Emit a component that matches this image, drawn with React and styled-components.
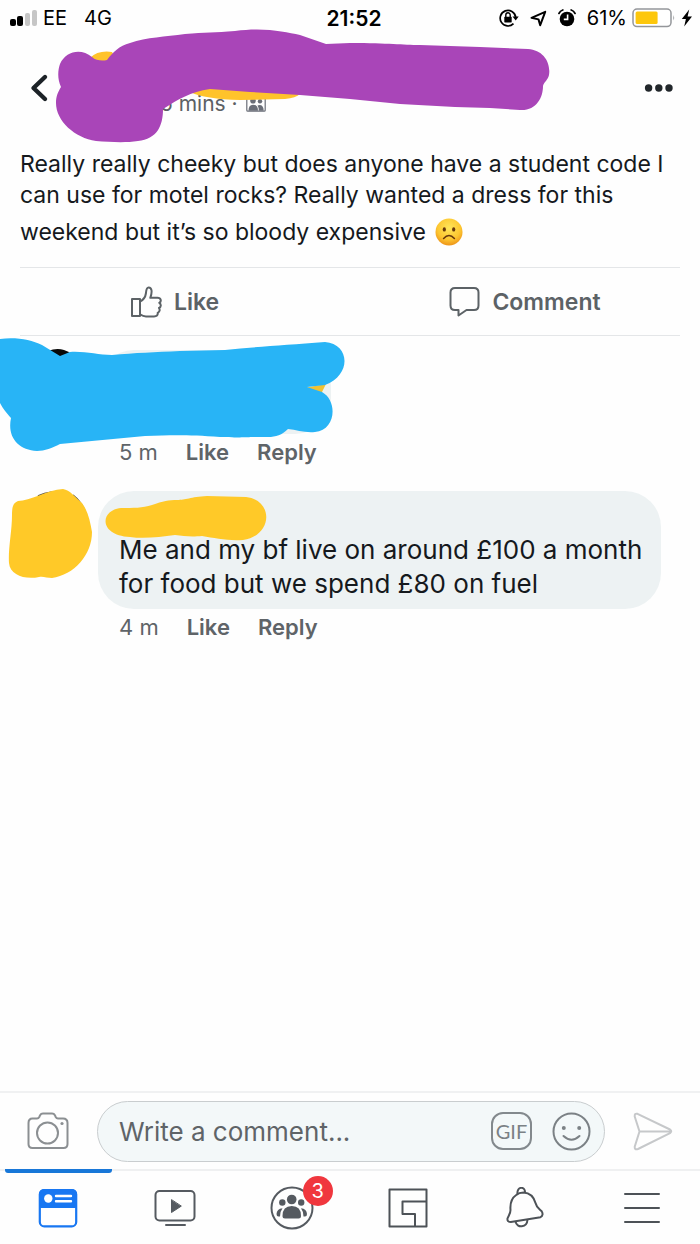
import React from "react";
import styled, { createGlobalStyle } from "styled-components";

const GlobalStyle = createGlobalStyle`
  * {
    box-sizing: border-box;
  }

  body {
    margin: 0;
    background-color: #fefefe;
    color: #15191d;
    font-family: Inter, "Liberation Sans", sans-serif;
  }

  button {
    padding: 0;
    border: none;
    background: none;
    font: inherit;
    color: inherit;
    cursor: pointer;
  }

  svg {
    display: block;
    flex-shrink: 0;
  }
`;

const Screen = styled.div`
  display: flex;
  flex-direction: column;
  min-height: 100vh;
  overflow-x: hidden;
`;

const StatusBar = styled.div`
  display: grid;
  grid-template-columns: 1fr auto 1fr;
  align-items: center;
  height: 36px;
  padding: 0 2px 0 10px;
  color: #000;
  font-size: 20px;
`;

const StatusGroup = styled.div`
  display: flex;
  align-items: center;
  gap: ${(props) => props.$gap}px;
`;

const StatusEnd = styled(StatusGroup)`
  justify-content: flex-end;
  padding-right: 5px;
`;

const Clock = styled.time`
  font-size: 21px;
  font-weight: 600;
`;

const Header = styled.header`
  position: relative;
  display: flex;
  align-items: center;
  justify-content: space-between;
  height: 104px;
  padding: 0 26px 0 28px;
`;

const PostMeta = styled.div`
  display: flex;
  align-items: center;
  flex: 1;
  gap: 8px;
  padding: 30px 0 0 110px;
  color: #5c6064;
  font-size: 21px;
`;

// marker strokes that hide names and avatars
const Scribble = styled.svg`
  position: absolute;
  top: ${(props) => props.$top}px;
  left: ${(props) => props.$left}px;
  pointer-events: none;
`;

const PostText = styled.p`
  margin: 0;
  padding: 9px 20px 10px;
  font-size: 23px;
  line-height: 31px;
`;

const Emoji = styled.span`
  display: inline-flex;
  align-items: center;
  height: 46px;
  padding: 0 0 4px 3px;
  vertical-align: middle;
`;

const Actions = styled.div`
  display: flex;
  height: 67px;
`;

const Divider = styled.hr`
  width: calc(100% - 40px);
  height: 1px;
  margin: 0 20px;
  border: none;
  background-color: #e4e6e8;
`;

const ActionButton = styled.button`
  display: flex;
  flex: 1;
  align-items: center;
  justify-content: center;
  gap: 12px;
  color: #5c6266;
  font-size: 23px;
  font-weight: 600;
`;

const Comments = styled.main`
  flex: 1;
`;

const Comment = styled.article`
  position: relative;
  padding: ${(props) => props.$top}px 39px 0 98px;
`;

const Bubble = styled.div`
  width: fit-content;
  min-width: ${(props) => props.$min || 0}px;
  min-height: ${(props) => props.$height}px;
  padding: 42px 12px 8px 21px;
  border-radius: 36px;
  background-color: #edf2f3;
  font-size: 26px;
  line-height: 34px;
`;

const CommentMeta = styled.div`
  display: flex;
  align-items: center;
  gap: 28px;
  height: 36px;
  padding-left: 21px;
  color: #5f6468;
  font-size: 22px;

  button {
    font-weight: 600;
  }
`;

const Composer = styled.form`
  display: flex;
  align-items: center;
  height: 78px;
  padding: 0 27px;
  gap: 28px;
  border-top: 2px solid #f0f1f2;
`;

const InputPill = styled.div`
  display: flex;
  flex: 1;
  align-items: center;
  gap: 20px;
  min-width: 0;
  height: 61px;
  padding: 0 13px 0 21px;
  border: 1px solid #c9cdcf;
  border-radius: 31px;
  background-color: #f3f8f9;
`;

const CommentInput = styled.input`
  flex: 1;
  min-width: 0;
  padding: 0;
  border: none;
  outline: none;
  background: none;
  color: #15191d;
  font: inherit;
  font-size: 26px;

  &::placeholder {
    color: #5f6468;
    opacity: 1;
  }
`;

const GifButton = styled.button`
  && {
    width: 41px;
    height: 38px;
    border: 2px solid #83898d;
    border-radius: 12px;
    color: #7b8185;
    font-family: Lato, "Liberation Sans", sans-serif;
    font-size: 20px;
    line-height: 34px;
  }
`;

const TabBar = styled.nav`
  display: flex;
  height: 75px;
  border-top: 2px solid #eff0f1;
`;

const Tab = styled.button`
  position: relative;
  display: flex;
  flex: 1;
  align-items: center;
  justify-content: center;

  &::before {
    content: "";
    position: absolute;
    top: -2px;
    right: 5px;
    left: 5px;
    height: 4px;
    border-radius: 0 0 3px 3px;
    background-color: ${(props) => (props.$active ? "#1877d8" : "transparent")};
  }
`;

const Badge = styled.span`
  position: absolute;
  top: 5px;
  left: calc(50% + 11px);
  width: 30px;
  height: 30px;
  border-radius: 50%;
  background-color: #f0373e;
  color: #fff;
  font-size: 20px;
  line-height: 30px;
  text-align: center;
`;

const SignalIcon = () => (
  <svg width="28" height="18" viewBox="0 0 28 18">
    <rect x="0" y="10" width="6" height="7" rx="2" />
    <rect x="7" y="7" width="6" height="10" rx="2" />
    <rect x="15" y="4" width="5" height="13" rx="2" fill="#c6c6c6" />
    <rect x="22" y="1" width="5" height="16" rx="2" fill="#c6c6c6" />
  </svg>
);

const LockIcon = () => (
  <svg width="20" height="18" viewBox="0 0 20 18" fill="none" stroke="#000">
    <path d="M14.5 14.7A7.8 7.8 0 1 1 16.7 8" strokeWidth="1.7" />
    <path d="M13.5 7.5h6.2l-3 4z" fill="#000" stroke="none" />
    <rect x="5.3" y="7.8" width="7.4" height="5.6" rx="0.6" fill="#000" stroke="none" />
    <path d="M6.8 8V6a2.2 2.2 0 0 1 4.4 0v2" strokeWidth="1.4" />
  </svg>
);

const LocationIcon = () => (
  <svg width="17" height="17" viewBox="0 0 17 17" fill="none" stroke="#000" strokeWidth="2" strokeLinejoin="round">
    <path d="M15.2 1.8L1.5 7.8l7 1.6 1.700 5.800z" />
  </svg>
);

const AlarmIcon = () => (
  <svg width="18" height="18" viewBox="0 0 18 18">
    <circle cx="9" cy="10" r="7.3" />
    <path d="M1 4.4Q2.2 1.8 4.8 1M17 4.4Q15.8 1.8 13.2 1" fill="none" stroke="#000" strokeWidth="1.8" strokeLinecap="round" />
    <path d="M9.6 5.4v5H5.8" fill="none" stroke="#fff" strokeWidth="1.6" />
  </svg>
);

const BatteryIcon = () => (
  <svg width="44" height="20" viewBox="0 0 44 20">
    <rect x="1" y="1" width="38" height="17.6" rx="4" fill="#fff" stroke="#94969a" strokeWidth="1.5" />
    <rect x="3.6" y="3.6" width="22" height="12.4" rx="1.5" fill="#fdc70c" />
    <path d="M41.3 7q1.8 2.8 0 5.6z" fill="#94969a" />
  </svg>
);

const BoltIcon = () => (
  <svg width="12" height="18" viewBox="0 0 12 18">
    <path d="M8.2 0.6L0.8 10h4.1L3.2 17.4 11 7.5H6.6z" />
  </svg>
);

const BackIcon = () => (
  <svg width="22" height="30" viewBox="0 0 22 30" fill="none" stroke="#1c2227" strokeWidth="4.400" strokeLinecap="round" strokeLinejoin="round">
    <path d="M17 4L5.5 15 17 26" />
  </svg>
);

const DotsIcon = () => (
  <svg width="30" height="10" viewBox="0 0 30 10" fill="#22272b">
    <circle cx="4.6" cy="5" r="3.7" />
    <circle cx="14.8" cy="5" r="3.7" />
    <circle cx="25" cy="5" r="3.7" />
  </svg>
);

const AudienceIcon = () => (
  <svg width="20" height="18" viewBox="0 0 20 18" fill="#6a6e78">
    <rect x="0.8" y="0.8" width="18.4" height="16.4" rx="1" fill="none" stroke="#6a6e78" strokeWidth="1.2" />
    <circle cx="7" cy="6.8" r="2.8" />
    <circle cx="14" cy="7.2" r="2.2" />
    <path d="M2.5 16.8q0-6 4.5-6 5 0 5 6zM12.8 16.8q0-3.600-1.300-5.400 6-1.600 6.200 5.400z" />
  </svg>
);

const SadFace = () => (
  <svg width="28" height="28" viewBox="0 0 28 28" role="img" aria-label="Sad face">
    <defs>
      <radialGradient id="face" cx="50%" cy="35%" r="65%">
        <stop offset="0" stopColor="#ffe65a" />
        <stop offset="0.65" stopColor="#fdc731" />
        <stop offset="1" stopColor="#ed9418" />
      </radialGradient>
    </defs>
    <circle cx="14" cy="14" r="13.5" fill="url(#face)" />
    <ellipse cx="9.3" cy="11.4" rx="1.6" ry="2.2" fill="#68380c" />
    <ellipse cx="18.700" cy="11.4" rx="1.6" ry="2.2" fill="#68380c" />
    <path d="M8.600 20.500Q14 14.600 19.400 20.500" fill="none" stroke="#68380c" strokeWidth="1.600" strokeLinecap="round" />
  </svg>
);

const LikeIcon = () => (
  <svg width="31" height="32" viewBox="0 0 31 32" fill="none" stroke="#5c6266" strokeWidth="2" strokeLinejoin="round">
    <path d="M1 13h8v17H1z" />
    <path d="M9 15.500c3-1.500 5.400-4.500 5.900-8 .3-3 .4-6 2.700-6 3.400 0 3.800 4.500 1.700 10.300h7.200c3.600 0 4.200 3.600 1.800 5 2.200 1.500 1.800 4.200-.3 5.200 1.300 1.800.6 4-1.300 4.800.3 2.500-1 3.600-3.700 3.600H15c-2.500 0-4-.8-6-2" />
  </svg>
);

const CommentIcon = () => (
  <svg width="31" height="31" viewBox="0 0 31 31" fill="none" stroke="#5c6266" strokeWidth="2" strokeLinejoin="round">
    <path d="M6 2h19q4.500 0 4.500 4.500v13q0 4.500-4.500 4.500h-7.500L9.500 29.500V24H6q-4.500 0-4.500-4.500v-13Q1.500 2 6 2z" />
  </svg>
);

const CameraIcon = () => (
  <svg width="42" height="38" viewBox="0 0 42 38" fill="none" stroke="#8b8f92" strokeWidth="2">
    <path d="M5.500 6.500H10q1.500 0 2.300-1.500l.8-1.800Q14 1.500 16 1.500h9q2 0 2.900 1.700l.8 1.800q.8 1.500 2.300 1.500h5q4.500 0 4.500 4.500v21q0 4-4 4h-31q-4 0-4-4V11q0-4.500 4-4.500z" />
    <circle cx="20.500" cy="21" r="10.500" />
    <circle cx="35" cy="11.500" r="1.600" fill="#8b8f92" stroke="none" />
  </svg>
);

const SmileIcon = () => (
  <svg width="39" height="39" viewBox="0 0 39 39" fill="none" stroke="#7b8185" strokeWidth="2" strokeLinecap="round">
    <circle cx="19.500" cy="19.500" r="18" />
    <circle cx="11.800" cy="16" r="2" fill="#7b8185" stroke="none" />
    <circle cx="27.200" cy="16" r="2" fill="#7b8185" stroke="none" />
    <path d="M11.500 24Q19.500 31.500 27.500 24" />
  </svg>
);

const SendIcon = () => (
  <svg width="40" height="39" viewBox="0 0 40 39" fill="none" stroke="#c6c8ca" strokeWidth="2" strokeLinejoin="round">
    <path d="M4.500 1.800L37 17.500q2.500 1.800 0 3.600L5 37q-3.500 1.300-3.300-2.200L6.500 19.500 1.700 4.500Q1.500 1 4.500 1.800zM6.500 19.500H38" />
  </svg>
);

const FeedIcon = () => (
  <svg width="40" height="40" viewBox="0 0 40 40">
    <rect x="1.800" y="2" width="36.400" height="36.400" rx="4.500" fill="#fff" stroke="#1877f2" strokeWidth="2.200" />
    <path d="M1 20V6.500Q1 1 6.500 1h27Q39 1 39 6.500V20z" fill="#1877f2" />
    <circle cx="10.300" cy="10.500" r="4.200" fill="#fff" />
    <path d="M18 8h15M18 13.300h15" stroke="#fff" strokeWidth="2.400" strokeLinecap="round" />
  </svg>
);

const WatchIcon = () => (
  <svg width="42" height="38" viewBox="0 0 42 38" fill="none" stroke="#555a60" strokeWidth="2" strokeLinecap="round">
    <rect x="1.500" y="2" width="39" height="29.500" rx="4" />
    <path d="M17.500 11v12.500l9.500-6.200z" fill="#555a60" strokeWidth="1" strokeLinejoin="round" />
    <path d="M12 36h19" />
  </svg>
);

const GroupsIcon = () => (
  <svg width="44" height="44" viewBox="0 0 44 44" fill="#555a60">
    <circle cx="22" cy="22" r="20.500" fill="none" stroke="#555a60" strokeWidth="2" />
    <circle cx="21.700" cy="13.500" r="4.800" />
    <circle cx="12.300" cy="16.500" r="3.200" />
    <circle cx="31.200" cy="16.500" r="3.200" />
    <path d="M12.500 30q0-10 9.300-10T31 30q0 2.500-2.500 2.500H15q-2.500 0-2.500-2.500zM12.500 22.300Q9.800 26 10 30.500H8.500Q6.500 30.500 6.500 28q.3-5.200 6-5.700zM31 22.300q2.700 3.700 2.500 8.200H35q2 0 2-2.500-.3-5.200-6-5.700z" />
  </svg>
);

const GamingIcon = () => (
  <svg width="40" height="40" viewBox="0 0 40 40" fill="none" stroke="#4d5257" strokeWidth="2" strokeLinejoin="round">
    <path d="M1.500 1.500h37v37h-37zM38.500 13.500h-24V26H27v12.500" />
  </svg>
);

const BellIcon = () => (
  <svg width="38" height="42" viewBox="0 0 38 42" fill="none" stroke="#4d5257" strokeWidth="2" strokeLinejoin="round">
    <path d="M10.200 8Q13 5.500 17.500 5.500c7 .5 10.500 5 12 10.500 1 4.500 3.500 5.500 6 8 1.700 2.500 1.300 5-1 6.200L4.800 35Q1 35 1.500 31.500c1-3 3-4.500 3-8.500C4 17 5 11.500 10.200 8z" />
    <path d="M11.500 7c-1-8 8-8 7.500-1.500M9.500 34.500c1.500 7 11.500 6.500 12-2" />
  </svg>
);

const MenuIcon = () => (
  <svg width="38" height="34" viewBox="0 0 38 34" stroke="#4d5257" strokeWidth="2" strokeLinecap="round">
    <path d="M2 3h34M2 17h34M2 31h34" />
  </svg>
);

const tabs = [
  { name: "News Feed", icon: <FeedIcon />, active: true },
  { name: "Watch", icon: <WatchIcon /> },
  { name: "Groups", icon: <GroupsIcon />, badge: 3 },
  { name: "Gaming", icon: <GamingIcon /> },
  { name: "Notifications", icon: <BellIcon /> },
  { name: "Menu", icon: <MenuIcon /> },
];

const CommentFooter = ({ age }) => (
  <CommentMeta>
    <span>{age}</span>
    <button type="button">Like</button>
    <button type="button">Reply</button>
  </CommentMeta>
);

const App = () => {
  return (
    <>
      <GlobalStyle />
      <Screen>
        <StatusBar>
          <StatusGroup $gap={5}>
            <SignalIcon />
            <StatusGroup $gap={17}>
              <span>EE</span>
              <span>4G</span>
            </StatusGroup>
          </StatusGroup>
          <Clock>21:52</Clock>
          <StatusEnd $gap={11}>
            <LockIcon />
            <LocationIcon />
            <AlarmIcon />
            <StatusGroup $gap={5}>
              <span>61%</span>
              <BatteryIcon />
              <BoltIcon />
            </StatusGroup>
          </StatusEnd>
        </StatusBar>

        <Header>
          <button type="button" aria-label="Back">
            <BackIcon />
          </button>
          <PostMeta>
            <span>5 mins ·</span>
            <AudienceIcon />
          </PostMeta>
          <Scribble $top={-8} $left={50} width="510" height="120" viewBox="50 28 510 120">
            <path d="M90 58Q98 50 112 52L118 62H92zM190 92Q205 99 240 100L285 99Q296 98 300 94L220 84z" fill="#ffc32b" />
            <path
              d="M61 87C57 78 58 70 60 64C66 51 81 48 92 57C96 61 103 61 107 60C113 52 119 46 130 43C147 37 165 37 185 34C205 32 215 33 235 31C265 27 285 32 300 35L326 44L350 43C390 43 402 45 420 45L480 47L528 49C543 50 551 62 549 75C548 80 544 82 543 86C543 98 536 111 520 110L490 108L455 107L400 104L350 99L300 95L250 92L210 89C190 92 179 99 163 109C163 126 157 139 138 141C125 143 110 142 96 141C75 138 56 121 56 103C56 96 58 92 61 87Z"
              fill="#a945b8"
            />
          </Scribble>
          <button type="button" aria-label="More options">
            <DotsIcon />
          </button>
        </Header>

        <PostText>
          Really really cheeky but does anyone have a student code I can use
          for motel rocks? Really wanted a dress for this weekend but it’s so
          bloody expensive{" "}
          <Emoji>
            <SadFace />
          </Emoji>
        </PostText>

        <Divider />
        <Actions>
          <ActionButton type="button">
            <LikeIcon />
            Like
          </ActionButton>
          <ActionButton type="button">
            <CommentIcon />
            Comment
          </ActionButton>
        </Actions>
        <Divider />

        <Comments>
          <Comment $top={14}>
            <Bubble $min={233} $height={84} />
            <CommentFooter age="5 m" />
            <Scribble $top={0} $left={0} width="350" height="118" viewBox="0 335 350 118">
              <path d="M48 350Q60 345 70 352L60 358z" fill="#080808" />
              <path d="M304 387l22-4-5 10z" fill="#f1c232" />
              <path
                d="M0 338C17 336 31 339 42 344L60 355L70 351C85 350 98 354 112 354C135 352 155 351 180 350L225 349C255 346 285 344 325 341C350 343 352 374 325 384L307 386L322 391C338 400 336 429 315 431C305 432 297 429 288 428C282 434 276 436 268 436C240 436 250 437 220 436C190 434 175 434 145 435L60 443C52 447 45 450 37 450C18 449 7 436 11 417C6 411 3 408 0 402Z"
                fill="#28b4f6"
              />
            </Scribble>
          </Comment>

          <Comment $top={21}>
            <Bubble $height={118}>
              Me and my bf live on around £100 a month for food but we spend
              £80 on fuel
            </Bubble>
            <CommentFooter age="4 m" />
            <Scribble $top={17} $left={4} width="266" height="96" viewBox="4 486 266 96">
              <path d="M38 495Q44 492 52 491M73 494Q82 501 86 513" fill="none" stroke="#55514c" strokeWidth="1.500" />
              <path
                d="M18 500C30 500 47 489 63 488C70 489 75 496 82 502C88 510 90 520 92 531C92 554 74 574 52 577C47 577 43 575 39 576C25 579 10 574 9 562C8 548 12 530 12 514C12 506 13 502 18 500Z"
                fill="#ffc928"
              />
              <path
                d="M121 507C134 507 142 507 152 504C163 500 169 499 177 499C186 499 190 496 207 495L246 496C274 499 273 535 243 539C227 540 215 537 202 535C190 536 184 535 175 534C160 536 144 538 130 536C98 534 100 509 121 507Z"
                fill="#ffc928"
              />
            </Scribble>
          </Comment>
        </Comments>

        <Composer onSubmit={(e) => e.preventDefault()}>
          <button type="button" aria-label="Add photo">
            <CameraIcon />
          </button>
          <InputPill>
            <CommentInput
              type="text"
              aria-label="Write a comment"
              placeholder="Write a comment..."
            />
            <GifButton type="button">GIF</GifButton>
            <button type="button" aria-label="Stickers">
              <SmileIcon />
            </button>
          </InputPill>
          <button type="submit" aria-label="Send">
            <SendIcon />
          </button>
        </Composer>

        <TabBar>
          {tabs.map((tab) => (
            <Tab key={tab.name} type="button" aria-label={tab.name} $active={tab.active}>
              {tab.icon}
              {tab.badge && <Badge>{tab.badge}</Badge>}
            </Tab>
          ))}
        </TabBar>
      </Screen>
    </>
  );
};

export default App;
